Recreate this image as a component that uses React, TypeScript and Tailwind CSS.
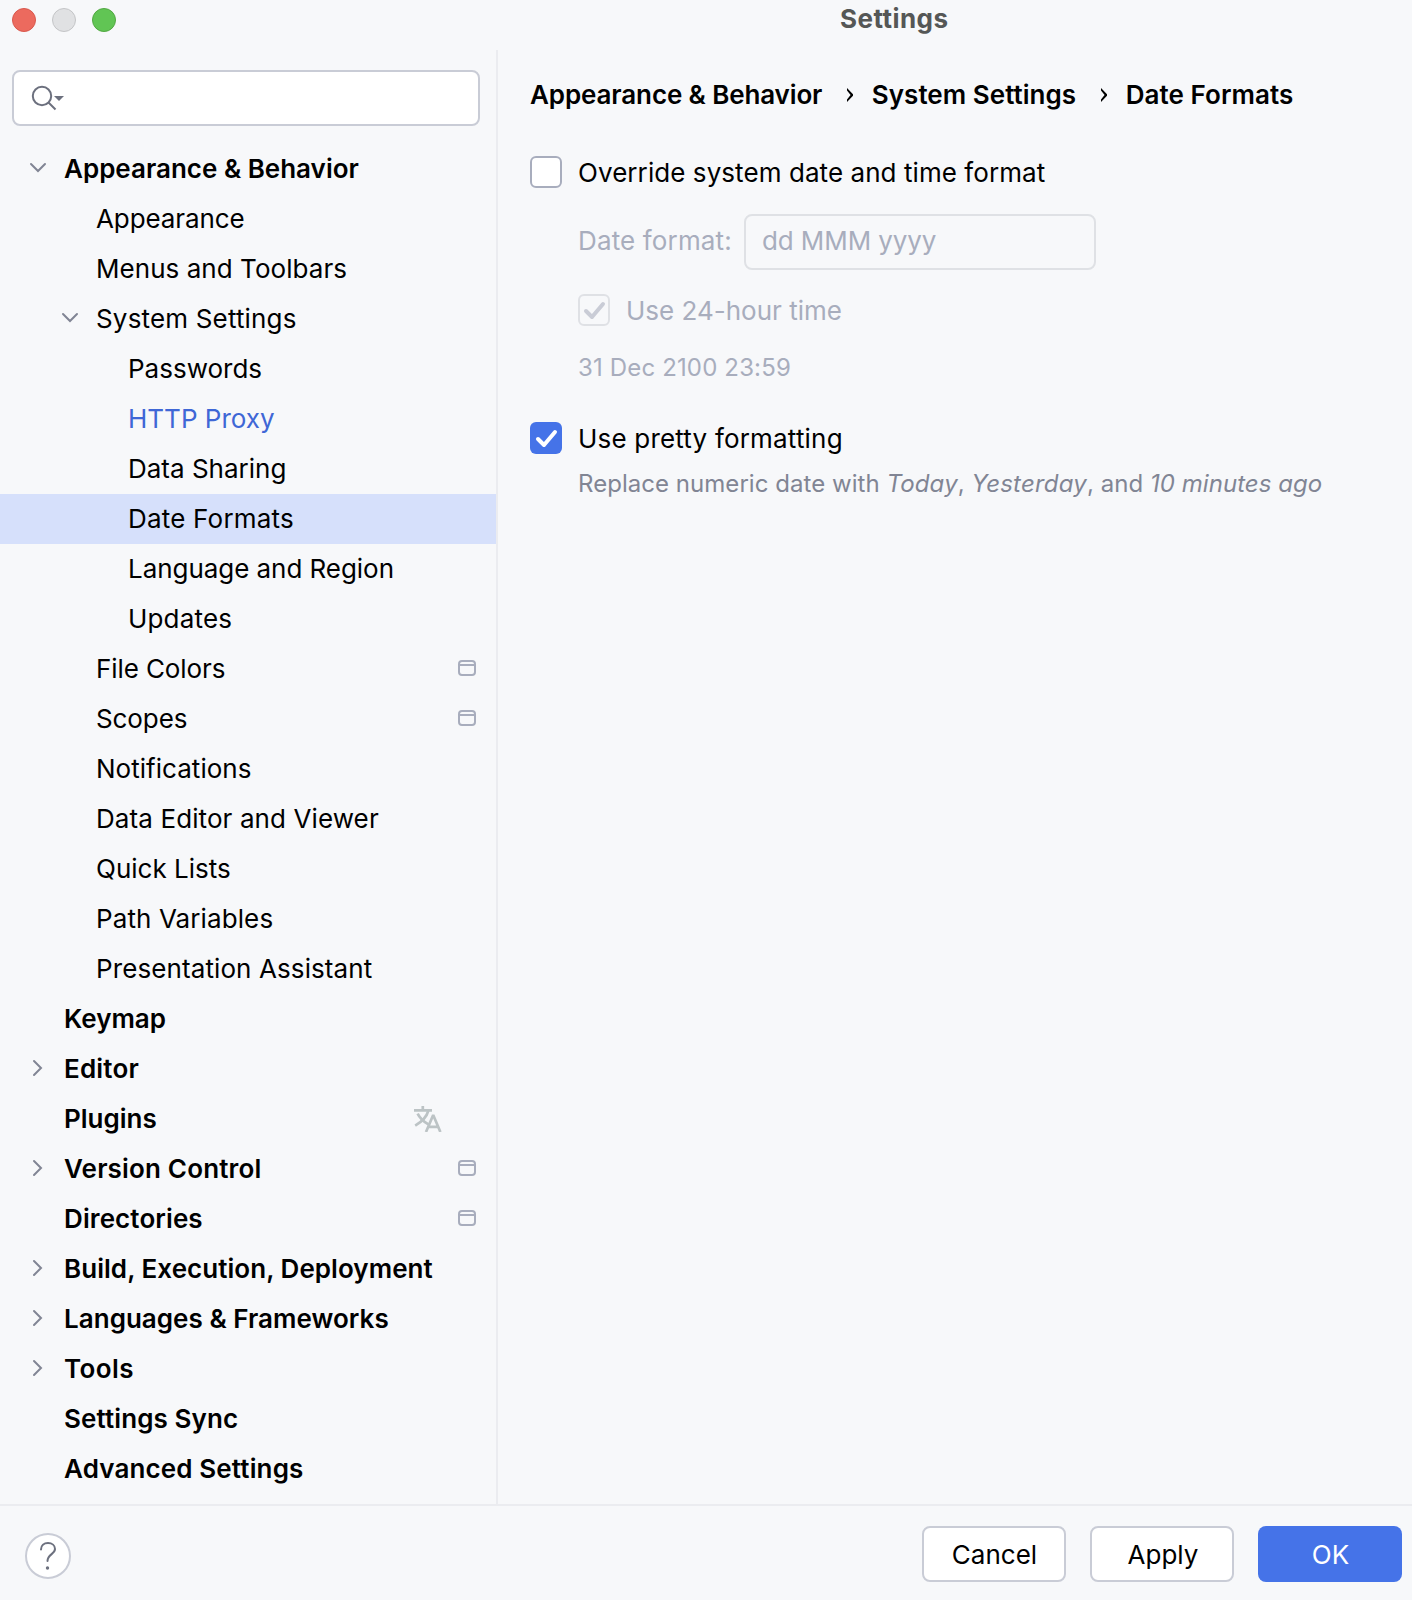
import { clsx } from "clsx";

type Item = {
  label: string;
  level: 0 | 1 | 2;
  arrow?: "open" | "closed";
  project?: boolean;
  translate?: boolean;
  modified?: boolean;
  selected?: boolean;
  tracking?: string;
};

const ITEMS: Item[] = [
  { label: "Appearance & Behavior", level: 0, arrow: "open" },
  { label: "Appearance", level: 1, tracking: "tracking-[-0.1px]" },
  { label: "Menus and Toolbars", level: 1, tracking: "tracking-[0.05px]" },
  { label: "System Settings", level: 1, arrow: "open", tracking: "tracking-[0.17px]" },
  { label: "Passwords", level: 2 },
  { label: "HTTP Proxy", level: 2, modified: true },
  { label: "Data Sharing", level: 2 },
  { label: "Date Formats", level: 2, selected: true, tracking: "tracking-[0.2px]" },
  { label: "Language and Region", level: 2, tracking: "tracking-[-0.05px]" },
  { label: "Updates", level: 2, tracking: "tracking-[0.17px]" },
  { label: "File Colors", level: 1, project: true, tracking: "tracking-[-0.1px]" },
  { label: "Scopes", level: 1, project: true, tracking: "tracking-[-0.1px]" },
  { label: "Notifications", level: 1, tracking: "tracking-[0.03px]" },
  { label: "Data Editor and Viewer", level: 1, tracking: "tracking-[0.1px]" },
  { label: "Quick Lists", level: 1 },
  { label: "Path Variables", level: 1, tracking: "tracking-[0.1px]" },
  { label: "Presentation Assistant", level: 1, tracking: "tracking-[0.1px]" },
  { label: "Keymap", level: 0 },
  { label: "Editor", level: 0, arrow: "closed", tracking: "tracking-[0.2px]" },
  { label: "Plugins", level: 0, translate: true },
  { label: "Version Control", level: 0, arrow: "closed", project: true, tracking: "tracking-[0.17px]" },
  { label: "Directories", level: 0, project: true, tracking: "tracking-[0.1px]" },
  { label: "Build, Execution, Deployment", level: 0, arrow: "closed", tracking: "tracking-[0.05px]" },
  { label: "Languages & Frameworks", level: 0, arrow: "closed", tracking: "tracking-[0.03px]" },
  { label: "Tools", level: 0, arrow: "closed", tracking: "tracking-[0.4px]" },
  { label: "Settings Sync", level: 0, tracking: "tracking-[0.1px]" },
  { label: "Advanced Settings", level: 0, tracking: "tracking-[0.13px]" },
];

const INDENT = ["pl-[22px]", "pl-[54px]", "pl-[86px]"];

function Arrow({ dir }: { dir: "open" | "closed" }) {
  return (
    <svg width="32" height="32" viewBox="0 0 32 32" fill="none" stroke="#818594" strokeWidth="2" strokeLinecap="round">
      <path d={dir === "open" ? "M9 11L16 18L23 11" : "M12 8L19 15L12 22"} />
    </svg>
  );
}

function ProjectIcon() {
  return (
    <svg width="18" height="16" viewBox="0 0 18 16" fill="none" stroke="#a8adbd" strokeWidth="2">
      <rect x="1" y="1" width="16" height="14" rx="3" />
      <path d="M1 5H17" />
    </svg>
  );
}

function TranslateIcon() {
  return (
    <svg className="mr-[34px] shrink-0" width="28" height="26" viewBox="0 0 28 26" fill="none" stroke="#bcc3c5" strokeWidth="2.7">
      <path d="M0 4.4H18M8.8 0V4.4" />
      <path d="M14.3 4.8C12.8 10.5 8 15.5 1.2 19.6" />
      <path d="M3.6 7.6C5.8 12 9.6 15.6 14.4 18.4" />
      <path d="M12 26L19.2 9L26.4 26M14.5 20.8H24" strokeLinejoin="bevel" />
    </svg>
  );
}

function TreeRow({ item }: { item: Item }) {
  return (
    <li
      className={clsx(
        "flex h-[50px] items-center pr-[20px]",
        INDENT[item.level],
        item.level === 0 && "font-semibold",
        item.selected && "bg-[#d6e0fb]",
        item.modified && "text-[#3f67d6]",
      )}
    >
      <span className="flex w-[42px] shrink-0">{item.arrow && <Arrow dir={item.arrow} />}</span>
      <span className={clsx("mb-[2px] flex-1 whitespace-nowrap", item.tracking)}>{item.label}</span>
      {item.translate && <TranslateIcon />}
      {item.project && <span className="mb-[2px]"><ProjectIcon /></span>}
    </li>
  );
}

function Sidebar() {
  return (
    <aside className="flex w-[498px] shrink-0 flex-col border-r-2 border-[#ebecf0] pt-5">
      <div className="ml-3 flex h-14 w-[468px] items-center rounded-lg border-2 border-[#c9ccd6] bg-white pl-4">
        <svg width="36" height="28" viewBox="30 84 36 28" fill="none">
          <circle cx="42" cy="96" r="9.2" stroke="#6c707e" strokeWidth="2" />
          <path d="M48.5 102.5L55.5 109.5" stroke="#6c707e" strokeWidth="2" />
          <path d="M54 96H64L59 101Z" fill="#6c707e" />
        </svg>
      </div>
      <ul className="mt-[18px]">
        {ITEMS.map((item) => (
          <TreeRow key={item.label} item={item} />
        ))}
      </ul>
    </aside>
  );
}

function Checkbox({ state }: { state: "off" | "on" | "disabled" }) {
  return (
    <span
      className={clsx(
        "flex size-8 shrink-0 items-center justify-center rounded-md",
        state === "off" && "border-2 border-[#a8adbd] bg-white",
        state === "disabled" && "border-2 border-[#dfe1e5]",
        state === "on" && "bg-[#4573e8]",
      )}
    >
      {state !== "off" && (
        <svg className="size-8 shrink-0" viewBox="0 0 32 32" fill="none" strokeWidth="4" strokeLinecap="round" strokeLinejoin="round">
          <path d="M8 17L14 23L25 10" stroke={state === "on" ? "#ffffff" : "#c9ccd6"} />
        </svg>
      )}
    </span>
  );
}

function Separator() {
  return (
    <svg className="ml-6 mr-[17.5px] mt-px shrink-0" width="8" height="14" viewBox="0 0 8 14" fill="#000">
      <path d="M1 0L7 6.2V7.8L1 14V11.6L4.6 7L1 2.4Z" />
    </svg>
  );
}

function Breadcrumbs() {
  return (
    <nav className="-mt-px flex h-[30px] items-center font-semibold">
      <span className="tracking-[-0.12px]">Appearance &amp; Behavior</span>
      <Separator />
      <span className="tracking-[0.03px]">System Settings</span>
      <Separator />
      <span className="tracking-[0.07px]">Date Formats</span>
    </nav>
  );
}

function DateFormats() {
  return (
    <main className="flex-1 whitespace-nowrap pl-8 pt-[30px]">
      <Breadcrumbs />
      <label className="mt-[47px] flex h-8 items-center gap-4 tracking-[0.07px]">
        <Checkbox state="off" />
        Override system date and time format
      </label>
      <div className="pl-12 text-[#a8adbd]">
        <div className="mt-[26px] flex h-14 items-center">
          <span className="mb-[4px] w-[166px] tracking-[0.15px]">Date format:</span>
          <span className="flex h-14 w-[352px] items-center rounded-lg border-2 border-[#dfe1e5] pb-[4px] pl-4 tracking-[-0.1px]">
            dd MMM yyyy
          </span>
        </div>
        <label className="mt-6 flex h-8 items-center gap-4">
          <Checkbox state="disabled" />
          Use 24-hour time
        </label>
        <p className="mt-[27px] h-[29px] text-2xl leading-[30px] tracking-[0.15px]">31 Dec 2100 23:59</p>
      </div>
      <label className="mt-10 flex h-8 items-center gap-4 tracking-[0.19px]">
        <Checkbox state="on" />
        Use pretty formatting
      </label>
      <p className="ml-12 mt-[15px] text-2xl leading-[30px] tracking-[0.04px] text-[#818594]">
        Replace numeric date with <i className="tracking-[0.15px]">Today</i>,{" "}
        <i className="tracking-[0.2px]">Yesterday</i>, and <i>10 minutes ago</i>
      </p>
    </main>
  );
}

function Footer() {
  return (
    <footer className="flex h-24 shrink-0 items-start border-t-2 border-[#ebecf0] pl-[25px] pr-[10px] pt-5">
      <button type="button" className="mt-[7px] flex size-[46px] items-center justify-center rounded-full border-2 border-[#c9ccd6] bg-white">
        <svg className="shrink-0" width="20" height="32" viewBox="0 0 20 32" fill="none">
          <path
            d="M3 9.5C3 5.5 6 3 10 3C14 3 17 5.5 17 9C17 14 9.5 14.5 9.5 21"
            stroke="#6c707e"
            strokeWidth="2"
            strokeLinecap="round"
          />
          <circle cx="9.5" cy="28" r="1.7" fill="#6c707e" />
        </svg>
      </button>
      <div className="ml-auto flex gap-6">
        <button type="button" className="h-14 w-36 rounded-lg border-2 border-[#c9ccd6] bg-white pl-px">Cancel</button>
        <button type="button" className="h-14 w-36 rounded-lg border-2 border-[#c9ccd6] bg-white pl-[2px]">Apply</button>
        <button type="button" className="h-14 w-36 rounded-lg bg-[#4573e8] pl-px text-white">OK</button>
      </div>
    </footer>
  );
}

export default function App() {
  return (
    <div className="flex h-[1600px] w-[1412px] flex-col overflow-hidden bg-[#f7f8fa] font-[Inter,sans-serif] text-[26px] text-black">
      <header className="flex h-[50px] shrink-0 items-start pl-3">
        <div className="flex gap-4 pt-2">
          <span className="size-6 rounded-full border border-[#d9584d] bg-[#ec6a5e]" />
          <span className="size-6 rounded-full border border-[#c4c5c7] bg-[#e0e1e3]" />
          <span className="size-6 rounded-full border border-[#52a842] bg-[#61c554]" />
        </div>
        <h1 className="ml-[724px] text-[26px] font-bold leading-[38px] tracking-[0.45px] text-[#555756]">Settings</h1>
      </header>
      <div className="flex flex-1">
        <Sidebar />
        <DateFormats />
      </div>
      <Footer />
    </div>
  );
}
